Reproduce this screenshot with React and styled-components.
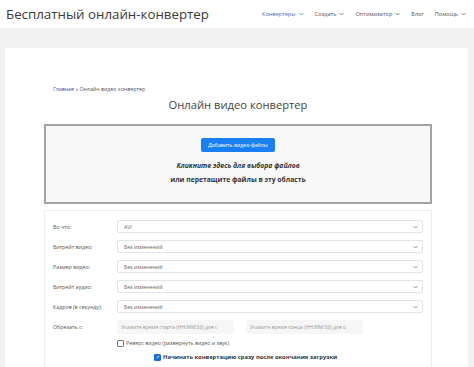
import React from 'react';
import styled, { createGlobalStyle } from 'styled-components';

const Global = createGlobalStyle`
  html, body { margin: 0; padding: 0; }
  body {
    background: #f2f2f2;
    font-family: "Open Sans", "Noto Sans", sans-serif;
    color: #333;
    overflow: hidden;
  }
`

const Header = styled.header`
  height: 28px;
  background: #fff;
  display: flex;
  align-items: center;
  justify-content: space-between;
  padding: 0 6px;
`

const SiteTitle = styled.div`
  font-size: 13.3px;
  color: #3a3a3a;
  white-space: nowrap;
`

const Nav = styled.nav`
  display: flex;
  gap: 11px;
  margin-right: 2px;
`

const NavItem = styled.span`
  font-size: 5.6px;
  color: ${p => p.active ? '#3b6fb5' : '#555'};
  display: flex;
  align-items: center;
  gap: 3px;
`

const Chevron = () => (
  <svg width="5" height="4" viewBox="0 0 10 6">
    <path d="M1 1l4 4 4-4" fill="none" stroke="currentColor" strokeWidth="1.4" />
  </svg>
)

const Page = styled.main`
  margin: 20px 6px 0 5px;
  background: #fff;
  padding-top: 37px;
  height: 319px;
  box-sizing: border-box;
  overflow: hidden;
`

const Inner = styled.div`
  margin: 0 36px 0 39px;
`

const Crumbs = styled.div`
  font-size: 5.3px;
  color: #555;
  margin-left: 9px;
  a { color: #4b4a9a; text-decoration: none; }
`

const Heading = styled.h1`
  margin: 4px 0 12px;
  text-align: center;
  font-weight: 400;
  font-size: 11.2px;
  color: #444;
`

const Drop = styled.div`
  border: 2px solid #a3a3a3;
  background: #f8f8f8;
  height: 80px;
  display: flex;
  flex-direction: column;
  align-items: center;
  padding-top: 12px;
  box-sizing: border-box;
`

const AddButton = styled.button`
  background: #1a7ff0;
  color: #fff;
  border: none;
  border-radius: 2px;
  font-family: inherit;
  font-size: 5.2px;
  padding: 0 7px;
  height: 14px;
  margin-bottom: 7px;
`

const DropText = styled.div`
  font-size: 6.8px;
  font-weight: 700;
  color: #333;
  line-height: 14px;
  font-style: ${p => p.italic ? 'italic' : 'normal'};
`

const Form = styled.div`
  margin-top: 6px;
  border: 1px solid #eee;
  border-bottom: none;
  padding: 9px 8px 0 8px;
  height: 160px;
  display: flex;
  flex-direction: column;
  gap: 7px;
`

const Row = styled.div`
  display: flex;
  align-items: center;
  gap: 6px;
`

const Label = styled.label`
  width: 58px;
  font-size: 5.3px;
  color: #555;
  flex: none;
`

const Select = styled.div`
  flex: 1;
  height: 13px;
  border: 1px solid #e3e3e3;
  border-radius: 2px;
  display: flex;
  align-items: center;
  justify-content: space-between;
  padding: 0 4px 0 6px;
  font-size: 5.2px;
  color: #666;
  box-sizing: border-box;
`

const Input = styled.div`
  width: 117px;
  height: 14px;
  background: #f6f6f6;
  border-radius: 2px;
  display: flex;
  align-items: center;
  padding-left: 4px;
  font-size: 5px;
  color: #999;
  white-space: nowrap;
  overflow: hidden;
  box-sizing: border-box;
`

const Checks = styled.div`
  display: flex;
  flex-direction: column;
  gap: 6px;
  margin-top: -2px;
`

const Check = styled.div`
  display: flex;
  align-items: center;
  gap: 2px;
  font-size: ${p => p.strong ? '5.8px' : '5.3px'};
  font-weight: ${p => p.strong ? 700 : 400};
  color: ${p => p.strong ? '#333' : '#555'};
  margin-left: ${p => p.indent}px;
`

const Box = styled.span`
  width: 5px;
  height: 5px;
  border: 1px solid ${p => p.checked ? '#1a6fd8' : '#777'};
  background: ${p => p.checked ? '#1a6fd8' : '#fff'};
  border-radius: 1px;
  display: inline-flex;
  align-items: center;
  justify-content: center;
`

const selects = [
  ['Во что:', 'AVI'],
  ['Битрейт видео:', 'Без изменений'],
  ['Размер видео:', 'Без изменений'],
  ['Битрейт аудио:', 'Без изменений'],
  ['Кадров (в секунду):', 'Без изменений'],
]

export default function App() {
  return (
    <>
      <Global />
      <Header>
        <SiteTitle>Бесплатный онлайн-конвертер</SiteTitle>
        <Nav>
          <NavItem active>Конвертеры <Chevron /></NavItem>
          <NavItem>Создать <Chevron /></NavItem>
          <NavItem>Оптимизатор <Chevron /></NavItem>
          <NavItem>Блог</NavItem>
          <NavItem>Помощь <Chevron /></NavItem>
        </Nav>
      </Header>
      <Page>
        <Inner>
          <Crumbs><a href="#">Главная</a> » Онлайн видео конвертер</Crumbs>
          <Heading>Онлайн видео конвертер</Heading>
          <Drop>
            <AddButton>Добавить видео-файлы</AddButton>
            <DropText italic>Кликните здесь для выбора файлов</DropText>
            <DropText>или перетащите файлы в эту область</DropText>
          </Drop>
          <Form>
            {selects.map(([label, value]) => (
              <Row key={label}>
                <Label>{label}</Label>
                <Select>
                  {value}
                  <Chevron />
                </Select>
              </Row>
            ))}
            <Row>
              <Label>Обрезать с:</Label>
              <Input>Укажите время старта (HH:MM:SS) для с</Input>
              <Input style={{ marginLeft: 6 }}>Укажите время конца (HH:MM:SS) для о</Input>
            </Row>
            <Checks>
              <Check indent={64}>
                <Box /> Реверс видео (развернуть видео и звук)
              </Check>
              <Check indent={101} strong>
                <Box checked>
                  <svg width="4" height="4" viewBox="0 0 10 10">
                    <path d="M2 5l2 2 4-5" fill="none" stroke="#fff" strokeWidth="2" />
                  </svg>
                </Box>
                Начинать конвертацию сразу после окончания загрузки
              </Check>
            </Checks>
          </Form>
        </Inner>
      </Page>
    </>
  )
}
